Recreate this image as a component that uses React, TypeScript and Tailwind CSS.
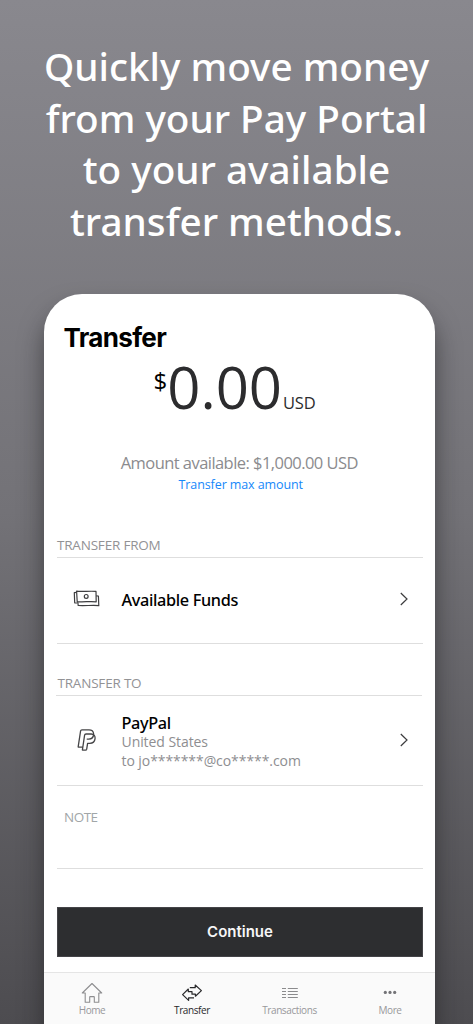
import React from "react";

function Chevron() {
  return (
    <svg width="10" height="16" viewBox="0 0 10 16" fill="none" stroke="#3c3c3e" strokeWidth="1.2">
      <path d="M1.8 2 L8 8 L1.8 14" />
    </svg>
  );
}

function Cash() {
  return (
    <svg width="28" height="20" viewBox="0 0 28 20" fill="none" stroke="#3e3e40" strokeWidth="1.2" strokeLinejoin="round">
      <path d="M3.6 2.2 C9 3 16 1.8 23 2.4 L23.2 12.8 C17 12.2 10 13.2 4.2 12.6 Z" />
      <path d="M3.6 3.4 L1.3 3.7 L1.7 13.8 L4.4 14" />
      <path d="M4.8 13 L5.2 16.5 C12 17 19 16 25.8 16.6 L25.4 7 L23.2 6.8" />
      <circle cx="13.2" cy="7.4" r="1.9" />
    </svg>
  );
}

function PayPal() {
  return (
    <svg width="20" height="24" viewBox="0 0 20 24" fill="none" stroke="#454547" strokeWidth="1.3" strokeLinejoin="round" strokeLinecap="round">
      <path d="M5.4 19.2 H1.6 Q1.1 19.2 1.2 18.6 L3.6 2.9 Q3.8 1.8 4.9 1.8 H12 Q16.2 1.8 16.6 5.6" />
      <path d="M5.4 21.8 L7.6 7.2 Q7.8 6 9 6 H14.2 C20 6 19.2 15.3 12.8 15.3 H10.6 L9.7 21.2 Q9.5 22.2 8.6 22.2 H5.9 Q5.3 22.2 5.4 21.8 Z" />
      <path d="M16.6 6.4 C16.4 9.8 14.4 11.1 11.8 11.1 H10.2" />
    </svg>
  );
}

function Home() {
  return (
    <svg width="22" height="22" viewBox="0 0 22 22" fill="none" stroke="#8e8e90" strokeWidth="1.1" strokeLinejoin="round">
      <path d="M11 1.5 L1.3 11 H4.2 V20.2 H8.7 V15 Q8.7 14.6 9.1 14.6 H12.9 Q13.3 14.6 13.3 15 V20.2 H17.8 V11 H20.7 Z" />
    </svg>
  );
}

function Arrows() {
  return (
    <svg width="22" height="20" viewBox="0 0 22 20" fill="none" stroke="#29292b" strokeWidth="1.2" strokeLinejoin="round">
      <path d="M8.8 4.7 H14.2 V2 L20.4 7.6 L14.4 13.2 V11.2 H11 V8.7 H7.3 V6 L1.6 11.6 L7.6 17.4 V14.8 H13" />
    </svg>
  );
}

function List() {
  return (
    <svg width="18" height="14" viewBox="0 0 18 14" fill="none" stroke="#8b8b8d" strokeWidth="1">
      <path d="M1 2.5 H5 M6.8 2.5 H16.8 M1 5.5 H5 M6.8 5.5 H16.8 M1 8.5 H5 M6.8 8.5 H16.8 M1 11.5 H5 M6.8 11.5 H16.8" />
    </svg>
  );
}

function Dots() {
  return (
    <svg width="14" height="6" viewBox="0 0 14 6" fill="#737377">
      <circle cx="2.3" cy="2.4" r="1.6" />
      <circle cx="7" cy="2.4" r="1.6" />
      <circle cx="11.7" cy="2.4" r="1.6" />
    </svg>
  );
}

function Tab({ label, color, width, children }: { label: string; color: string; width: string; children: React.ReactNode }) {
  return (
    <div className={`flex ${width} shrink-0 flex-col items-center`}>
      <div className="flex h-[30px] items-center pt-[10px]">{children}</div>
      <span className={`text-[10px] leading-[14px] tracking-[-0.4px] whitespace-nowrap ${color}`}>{label}</span>
    </div>
  );
}

export default function App() {
  return (
    <main className="flex h-[1024px] w-[473px] flex-col overflow-hidden bg-linear-to-b from-[#89888e] via-[#737277] to-[#4d4c50] font-['Open_Sans','Noto_Sans',sans-serif]">
      <h1 className="flex h-[294px] shrink-0 flex-col items-center pt-[41px] font-['Noto_Sans',sans-serif] text-[38.7px] leading-[51.6px] font-medium text-white">
        <span className="whitespace-nowrap">Quickly move money</span>
        <span className="whitespace-nowrap">from your Pay Portal</span>
        <span className="whitespace-nowrap">to your available</span>
        <span className="whitespace-nowrap">transfer methods.</span>
      </h1>

      <section className="ml-[43.5px] flex h-[730px] w-[391.5px] flex-col rounded-t-[38px] bg-white shadow-[0_16px_24px_rgba(25,25,28,0.55)]">
        <h2 className="h-[62px] shrink-0 pt-[28px] pl-5 font-['Inter',sans-serif] text-[26px] leading-8 font-bold tracking-[-0.65px] text-black">Transfer</h2>

        <div className="flex h-[90px] shrink-0 items-start pl-[110px] text-[#2c2c2e]">
          <span className="pt-[9px] text-[24px] leading-8 text-black">$</span>
          <span className="-mt-[2px] text-[58px] leading-[66px]">0.00</span>
          <span className="pt-[35px] pl-px text-[16.5px] leading-6 tracking-[-0.2px]">USD</span>
        </div>

        <div className="flex h-[92px] shrink-0 flex-col items-center pt-[5px]">
          <p className="text-[16.5px] leading-6 tracking-[-0.55px] whitespace-nowrap text-[#8b8b8e]">Amount available: $1,000.00 USD</p>
          <p className="pl-[3px] text-[12.5px] leading-5 tracking-[-0.1px] text-[#1688fa]">Transfer max amount</p>
        </div>

        <h3 className="ml-[13.5px] h-[20px] w-[366px] shrink-0 border-b border-[#dedede] text-[13.5px] leading-[14px] tracking-[-0.2px] text-[#929295]">TRANSFER FROM</h3>
        <div className="ml-[13.5px] flex h-[86px] w-[366px] shrink-0 items-center border-b border-[#dedede] pb-[4px] pl-4">
          <Cash />
          <span className="ml-[20.5px] flex-1 pt-[2px] font-['Noto_Sans',sans-serif] text-[16.3px] leading-6 font-medium tracking-[-0.35px] text-black">Available Funds</span>
          <div className="mr-[14px]"><Chevron /></div>
        </div>

        <h3 className="ml-[12px] h-[52px] w-[366px] shrink-0 border-b border-[#dedede] pt-[31px] pl-[2px] text-[13.5px] leading-4 tracking-[-0.2px] text-[#929295]">TRANSFER TO</h3>
        <div className="ml-[13.5px] flex h-[90px] w-[366px] shrink-0 items-center border-b border-[#dedede] pb-px pl-5">
          <PayPal />
          <div className="ml-[24.5px] flex-1 pt-[3px] text-[14px] leading-[19px] tracking-[-0.07px] text-[#8e8e91]">
            <p className="pt-px font-['Noto_Sans',sans-serif] text-[16.3px] leading-[17px] font-medium tracking-[-0.35px] text-black">PayPal</p>
            <p>United States</p>
            <p>to jo*******@co*****.com</p>
          </div>
          <div className="mr-[14px]"><Chevron /></div>
        </div>

        <div className="ml-[13.5px] h-[83px] w-[366px] shrink-0 border-b border-[#dedede] pt-[21px] pl-[7px] text-[13.5px] leading-5 tracking-[-0.5px] text-[#a1a6a8]">NOTE</div>

        <button className="mt-[38px] ml-[13.5px] h-[50px] w-[366px] shrink-0 border border-[#444448] bg-[#2d2e30] font-['Inter',sans-serif] text-[15px] leading-5 font-semibold text-[#f6f6f7]">Continue</button>

        <nav className="mt-[15px] flex h-[53px] shrink-0 border-t border-[#e5e5e5] bg-[#fafafa]">
          <Tab label="Home" color="text-[#98989b]" width="w-[97px]"><Home /></Tab>
          <Tab label="Transfer" color="text-[#29292b]" width="w-[103px]"><Arrows /></Tab>
          <Tab label="Transactions" color="text-[#98989b]" width="w-[92px]"><List /></Tab>
          <Tab label="More" color="text-[#98989b]" width="w-[109px]"><Dots /></Tab>
        </nav>
      </section>
    </main>
  );
}
